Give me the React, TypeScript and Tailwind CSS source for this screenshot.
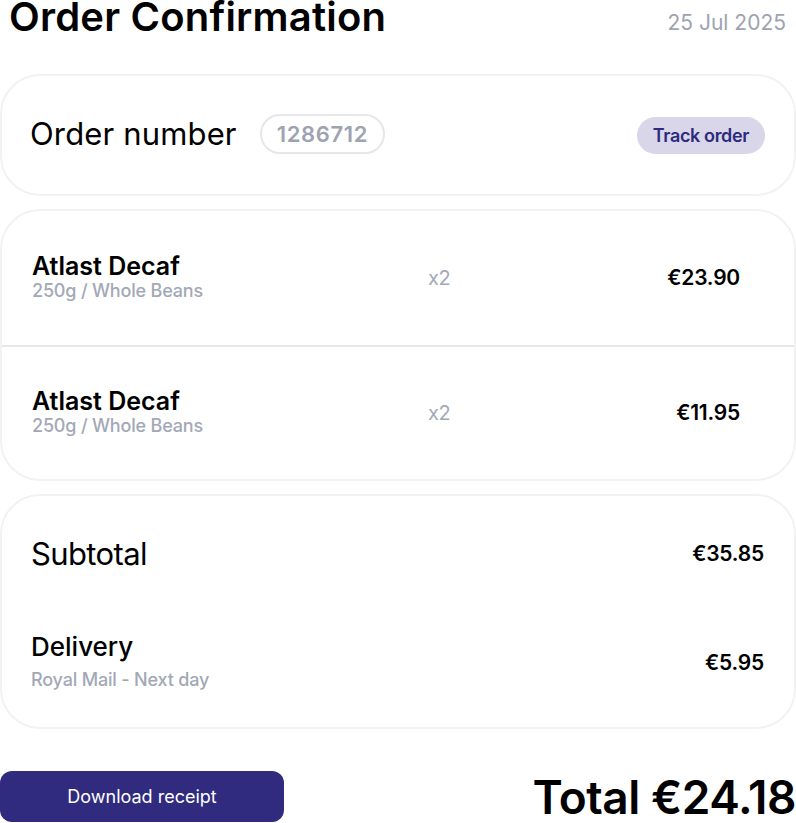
export default function App() {
  const items = [
    { name: 'Atlast Decaf', variant: '250g / Whole Beans', qty: 'x2', price: '€23.90' },
    { name: 'Atlast Decaf', variant: '250g / Whole Beans', qty: 'x2', price: '€11.95' },
  ];

  return (
    <div
      className="w-[796px] bg-white text-black"
      style={{ fontFamily: 'Inter, "Liberation Sans", sans-serif' }}
    >
      <header className="flex items-start justify-between pl-[9px] pr-[10px]">
        <h1 className="-mt-[3px] text-[40px] font-semibold leading-none tracking-[0.005em]">Order Confirmation</h1>
        <span className="mt-[12px] text-[21px] leading-none text-[#9ea3b1]">25 Jul 2025</span>
      </header>

      <main className="mt-[37px] flex flex-col gap-[13px]">
        <section className="flex h-[122px] items-center justify-between rounded-[40px] border-2 border-[#f2f2f3] pl-[28px] pr-[29px]">
          <div className="-mt-[3px] flex items-center gap-[23px]">
            <span className="text-[31px] leading-none tracking-[0.005em]">Order number</span>
            <span className="rounded-full border-2 border-[#e6e7ea] px-[15px] py-[7px] text-[22px] font-semibold leading-[22px] tracking-[0.03em] text-[#9ea3b1]">
              1286712
            </span>
          </div>
          <button
            type="button"
            className="h-[37px] rounded-full bg-[#d8d6e8] px-[16px] text-[18px] font-semibold tracking-[-0.02em] text-[#2e2a7e]"
          >
            Track order
          </button>
        </section>

        <section className="flex flex-col rounded-[40px] border-2 border-[#f2f2f3]">
          {items.map((item, i) => (
            <div
              key={i}
              className={`flex h-[134px] items-center pl-[30px] pr-[54px] ${i > 0 ? 'border-t-2 border-[#e6e7ea]' : ''}`}
            >
              <div className="-mt-[3px] flex w-[396px] flex-col">
                <span className="text-[25px] font-semibold leading-[28px]">{item.name}</span>
                <span className="text-[18px] font-medium leading-[22px] tracking-[-0.01em] text-[#a3a8b6]">{item.variant}</span>
              </div>
              <span className="-mt-[1px] text-[20px] leading-none tracking-[-0.02em] text-[#a3a8b6]">{item.qty}</span>
              <span className="-mt-[1px] ml-auto text-[21px] font-semibold leading-none tracking-[-0.01em]">{item.price}</span>
            </div>
          ))}
        </section>

        <section className="flex flex-col rounded-[40px] border-2 border-[#f2f2f3] pb-[35px] pl-[29px] pr-[30px] pt-[39px]">
          <div className="flex h-[36px] items-center justify-between">
            <span className="text-[31px] leading-none tracking-[-0.02em]">Subtotal</span>
            <span className="text-[21px] font-semibold leading-none tracking-[-0.01em]">€35.85</span>
          </div>
          <div className="mt-[61px] flex items-center justify-between">
            <div className="flex flex-col">
              <span className="text-[26px] font-medium leading-[30px]">Delivery</span>
              <span className="mt-[6px] text-[18px] font-medium leading-[24px] tracking-[-0.01em] text-[#a3a8b6]">Royal Mail - Next day</span>
            </div>
            <span className="text-[21px] font-semibold leading-none tracking-[-0.01em]">€5.95</span>
          </div>
        </section>
      </main>

      <footer className="mt-[42px] flex items-center justify-between">
        <button
          type="button"
          className="h-[51px] w-[284px] rounded-[12px] bg-[#312b80] text-[18px] text-white"
        >
          Download receipt
        </button>
        <span className="whitespace-nowrap text-[46px] font-semibold leading-none tracking-[-0.01em]">Total €24.18</span>
      </footer>
    </div>
  );
}
